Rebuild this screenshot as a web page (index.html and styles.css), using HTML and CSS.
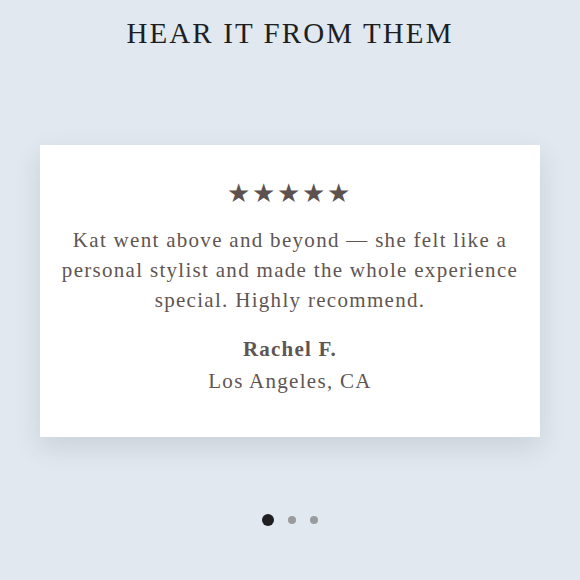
FILE: index.html
```html
<!DOCTYPE html>
<html>
<head>
<meta charset="utf-8">
<link rel="stylesheet" href="styles.css">
</head>
<body>
<section class="testimonials">
  <h2 class="title">HEAR IT FROM THEM</h2>
  <div class="card">
    <div class="stars">★★★★★</div>
    <p class="quote">Kat went above and beyond — she felt like a personal stylist and made the whole experience special. Highly recommend.</p>
    <div class="name">Rachel F.</div>
    <div class="place">Los Angeles, CA</div>
  </div>
  <div class="dots">
    <span class="dot active"></span>
    <span class="dot"></span>
    <span class="dot"></span>
  </div>
</section>
</body>
</html>
```
FILE: styles.css
```css
html, body {
  margin: 0;
  padding: 0;
  background: #e1e8ef;
  width: 580px;
  height: 580px;
  overflow: hidden;
}
.testimonials {
  display: flex;
  flex-direction: column;
  align-items: center;
  font-family: "Liberation Serif", "DejaVu Serif", serif;
}
.title {
  margin: 15px 0 0;
  font-size: 29px;
  font-weight: normal;
  letter-spacing: 2.1px;
  color: #1e1f22;
  line-height: 36px;
}
.card {
  margin-top: 94px;
  width: 500px;
  height: 292px;
  box-sizing: border-box;
  background: #fff;
  box-shadow: 0 10px 24px rgba(60, 70, 90, 0.14);
  display: flex;
  flex-direction: column;
  align-items: center;
  padding-top: 34px;
  color: #5f5552;
}
.stars {
  font-size: 26px;
  line-height: 30px;
  letter-spacing: 2px;
  margin-right: 2px;
  color: #5d524f;
}
.quote {
  margin: 16px 0 0;
  width: 480px;
  text-align: center;
  font-size: 21px;
  line-height: 30px;
  letter-spacing: 1.3px;
}
.name {
  margin-top: 19px;
  font-size: 21px;
  font-weight: bold;
  letter-spacing: 1.2px;
  line-height: 30px;
}
.place {
  font-size: 21px;
  letter-spacing: 1.3px;
  line-height: 34px;
}
.dots {
  margin-top: 77px;
  display: flex;
  align-items: center;
  gap: 14px;
}
.dot {
  width: 8px;
  height: 8px;
  border-radius: 50%;
  background: #9a9b9d;
}
.dot.active {
  width: 12px;
  height: 12px;
  background: #1f1f22;
}
```
